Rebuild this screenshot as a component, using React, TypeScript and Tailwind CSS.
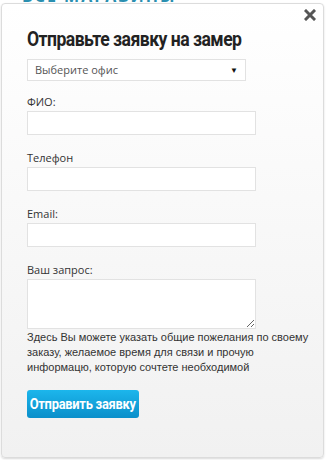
function Field({ label, top }: { label: string; top: string }) {
    return (
        <div className={`flex flex-col ${top}`}>
            <label className="text-[11px] leading-[13px] text-[#333]">{label}</label>
            <input className="mt-[3px] w-[229px] h-[24px] border border-[#e2e2e2] bg-white outline-none" />
        </div>
    )
}

export default function App() {
    return (
        <div className="relative w-[326px] h-[460px] bg-white overflow-hidden font-['Open_Sans',sans-serif]">
            <div className="absolute -top-[16px] left-[22px] text-[16px] font-bold text-[#2a8fb0] tracking-[2px]">ВСЕ МАГАЗИНЫ</div>
            <div className="relative mt-[3px] ml-[1px] w-[323px] h-[455px] rounded-[4px] border border-[#dcdcdc] bg-gradient-to-b from-white to-[#f1f1f1] shadow-[0_1px_2px_rgba(0,0,0,0.15)] px-[25px] pt-[22px]">
                <button className="absolute right-[7px] top-[5px] text-[#555]">
                    <svg width="12" height="12" viewBox="0 0 12 12">
                        <path d="M2 2 L10 10 M10 2 L2 10" stroke="currentColor" strokeWidth="3" strokeLinecap="square" />
                    </svg>
                </button>
                <h2 className="text-[20px] leading-[26px] font-bold text-[#222] tracking-[-0.6px] font-['Roboto',sans-serif] scale-x-[0.88] origin-left whitespace-nowrap">
                    Отправьте заявку на замер
                </h2>
                <div className="mt-[7px] w-[219px] h-[22px] border border-[#e2e2e2] bg-white flex items-center justify-between pl-[7px] pr-[7px]">
                    <span className="text-[11px] text-[#555]">Выберите офис</span>
                    <span className="text-[8px] text-[#111]">▼</span>
                </div>
                <Field label="ФИО:" top="mt-[14px]" />
                <Field label="Телефон" top="mt-[16px]" />
                <Field label="Email:" top="mt-[16px]" />
                <div className="flex flex-col mt-[16px]">
                    <label className="text-[11px] leading-[13px] text-[#333]">Ваш запрос:</label>
                    <textarea className="mt-[3px] w-[229px] h-[50px] border border-[#e2e2e2] bg-white outline-none resize" />
                </div>
                <p className="mt-[1px] text-[11px] leading-[15px] text-[#333] w-[290px] font-['Liberation_Sans',sans-serif]">
                    Здесь Вы можете указать общие пожелания по своему<br />
                    заказу, желаемое время для связи и прочую<br />
                    информацю, которую сочтете необходимой
                </p>
                <button className="mt-[15px] h-[28px] w-[112px] rounded-[3px] bg-gradient-to-b from-[#1cb6ec] to-[#0a8fca] text-white text-[15px] leading-[28px] font-bold font-['Roboto',sans-serif] whitespace-nowrap flex items-center justify-center">
                    <span className="inline-block scale-x-[0.86] tracking-[-0.3px]">Отправить заявку</span>
                </button>
            </div>
        </div>
    )
}
